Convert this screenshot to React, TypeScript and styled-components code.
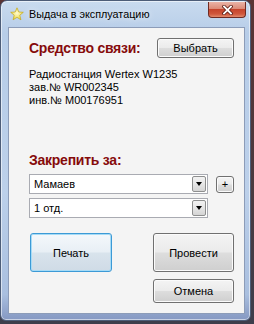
import React from "react";
import styled, { createGlobalStyle } from "styled-components";

const Global = createGlobalStyle`
  html, body { margin: 0; padding: 0; }
  body {
    width: 254px;
    height: 324px;
    overflow: hidden;
    background: linear-gradient(180deg, #5a3434 0%, #4a3a40 60%, #3e3e4c 100%);
    font-family: "Liberation Sans", Arial, sans-serif;
  }
`;

const Window = styled.div`
  box-sizing: border-box;
  width: 251px;
  height: 321px;
  border: 1px solid #4d5d78;
  border-radius: 7px 7px 6px 6px;
  background: linear-gradient(180deg, #c9dbef 0%, #b7cde8 10%, #bcd0ea 60%, #a9bfdf 92%, #8598c2 100%);
  box-shadow: inset 0 0 0 1px rgba(255, 255, 255, 0.55);
  display: flex;
  flex-direction: column;
  padding: 0 5px 6px 7px;
`;

const TitleBar = styled.div`
  height: 26px;
  display: flex;
  align-items: center;
  position: relative;
`;

const TitleIcon = styled.svg`
  width: 14px;
  height: 14px;
  margin: 0 5px 0 2px;
  flex: none;
`;

const TitleText = styled.span`
  font-family: "Liberation Sans", Arial, sans-serif;
  font-size: 10.8px;
  color: #000;
  text-shadow: 0 0 6px rgba(255, 255, 255, 0.9);
`;

const CloseButton = styled.div`
  position: absolute;
  right: -1px;
  top: 1px;
  width: 38px;
  height: 16px;
  box-sizing: border-box;
  border: 1px solid #6f2a22;
  border-top: none;
  border-radius: 0 0 4px 4px;
  background: linear-gradient(180deg, #eab3a6 0%, #dc8b78 45%, #c6442c 50%, #d0573c 80%, #e28a6c 100%);
  display: flex;
  align-items: center;
  justify-content: center;
`;

const Client = styled.div`
  flex: 1;
  box-sizing: border-box;
  border: 1px solid #8c9cb8;
  background: #f4f4f4;
  display: flex;
  flex-direction: column;
  padding: 10px 10px 0 20px;
`;

const HeaderRow = styled.div`
  display: flex;
  align-items: center;
  justify-content: space-between;
  height: 20px;
`;

const Heading = styled.div`
  font-family: "Liberation Sans", Arial, sans-serif;
  font-weight: bold;
  font-size: 14px;
  color: #860b0b;
  height: 20px;
  line-height: 20px;
  letter-spacing: -0.25px;
`;

const Button = styled.button<{ $w: number; $h: number; $focused?: boolean }>`
  box-sizing: border-box;
  width: ${(p) => p.$w}px;
  height: ${(p) => p.$h}px;
  padding: 0;
  border: 1px solid ${(p) => (p.$focused ? "#3c9ad6" : "#707070")};
  border-radius: 3px;
  background: ${(p) =>
    p.$focused
      ? "linear-gradient(180deg, #f4f8fb 0%, #e8eff5 48%, #d8e3ec 52%, #cfdbe6 100%)"
      : "linear-gradient(180deg, #f4f4f4 0%, #ebebeb 48%, #dddddd 52%, #cfcfcf 100%)"};
  box-shadow: inset 0 0 0 1px ${(p) => (p.$focused ? "#a6dbf6" : "#fbfbfb")};
  font-family: "Liberation Sans", Arial, sans-serif;
  font-size: 11px;
  color: #000;
  display: flex;
  align-items: center;
  justify-content: center;
  flex: none;
`;

const Info = styled.div`
  margin-top: 10px;
  font-family: "Liberation Sans", Arial, sans-serif;
  font-size: 11px;
  line-height: 13px;
  color: #000;
`;

const Section = styled.div`
  margin-top: 43px;
`;

const ComboRow = styled.div`
  display: flex;
  align-items: center;
  gap: 8px;
  margin-top: 4px;
  height: 20px;
`;

const Combo = styled.div`
  box-sizing: border-box;
  width: 179px;
  height: 20px;
  border: 1px solid #a9abb2;
  background: #fff;
  display: flex;
  align-items: center;
  justify-content: space-between;
  padding: 0 1px 0 4px;
  font-family: "Liberation Sans", Arial, sans-serif;
  font-size: 11px;
  color: #000;
`;

const ComboArrow = styled.div`
  box-sizing: border-box;
  width: 14px;
  height: 16px;
  border: 1px solid #8e8f8f;
  border-radius: 2px;
  background: linear-gradient(180deg, #f2f2f2 0%, #e6e6e6 50%, #d4d4d4 100%);
  display: flex;
  align-items: center;
  justify-content: center;
`;

const Triangle = styled.div`
  width: 0;
  height: 0;
  border-left: 3.5px solid transparent;
  border-right: 3.5px solid transparent;
  border-top: 4px solid #000;
`;

const Actions = styled.div`
  display: flex;
  justify-content: space-between;
  margin-top: 15px;
  padding-left: 1px;
`;

const Stack = styled.div`
  display: flex;
  flex-direction: column;
  gap: 7px;
`;

export default function App() {
  return (
    <>
      <Global />
      <Window>
        <TitleBar>
          <TitleIcon viewBox="0 0 14 14">
            <defs>
              <radialGradient id="g" cx="50%" cy="45%" r="60%">
                <stop offset="0%" stopColor="#fffbd0" />
                <stop offset="100%" stopColor="#e8d330" />
              </radialGradient>
            </defs>
            <polygon
              points="7,0.8 8.8,5 13.3,5.3 9.8,8.2 10.9,12.8 7,10.3 3.1,12.8 4.2,8.2 0.7,5.3 5.2,5"
              fill="url(#g)"
              stroke="#c5a818"
              strokeWidth="0.7"
            />
          </TitleIcon>
          <TitleText>Выдача в эксплуатацию</TitleText>
          <CloseButton>
            <svg width="11" height="10" viewBox="0 0 11 10">
              <path d="M2 1.5 L9 8.5 M9 1.5 L2 8.5" stroke="#5a1a12" strokeWidth="3.4" strokeLinecap="square" />
              <path d="M2 1.5 L9 8.5 M9 1.5 L2 8.5" stroke="#ffffff" strokeWidth="1.8" strokeLinecap="square" />
            </svg>
          </CloseButton>
        </TitleBar>
        <Client>
          <HeaderRow>
            <Heading>Средство связи:</Heading>
            <Button $w={77} $h={20}>Выбрать</Button>
          </HeaderRow>
          <Info>
            <div>Радиостанция Wertex W1235</div>
            <div>зав.№ WR002345</div>
            <div>инв.№ M00176951</div>
          </Info>
          <Section>
            <Heading>Закрепить за:</Heading>
            <ComboRow>
              <Combo>
                <span>Мамаев</span>
                <ComboArrow><Triangle /></ComboArrow>
              </Combo>
              <Button $w={18} $h={17}>+</Button>
            </ComboRow>
            <ComboRow>
              <Combo>
                <span>1 отд.</span>
                <ComboArrow><Triangle /></ComboArrow>
              </Combo>
            </ComboRow>
          </Section>
          <Actions>
            <Button $w={82} $h={39} $focused>Печать</Button>
            <Stack>
              <Button $w={81} $h={39}>Провести</Button>
              <Button $w={81} $h={24}>Отмена</Button>
            </Stack>
          </Actions>
        </Client>
      </Window>
    </>
  );
}
